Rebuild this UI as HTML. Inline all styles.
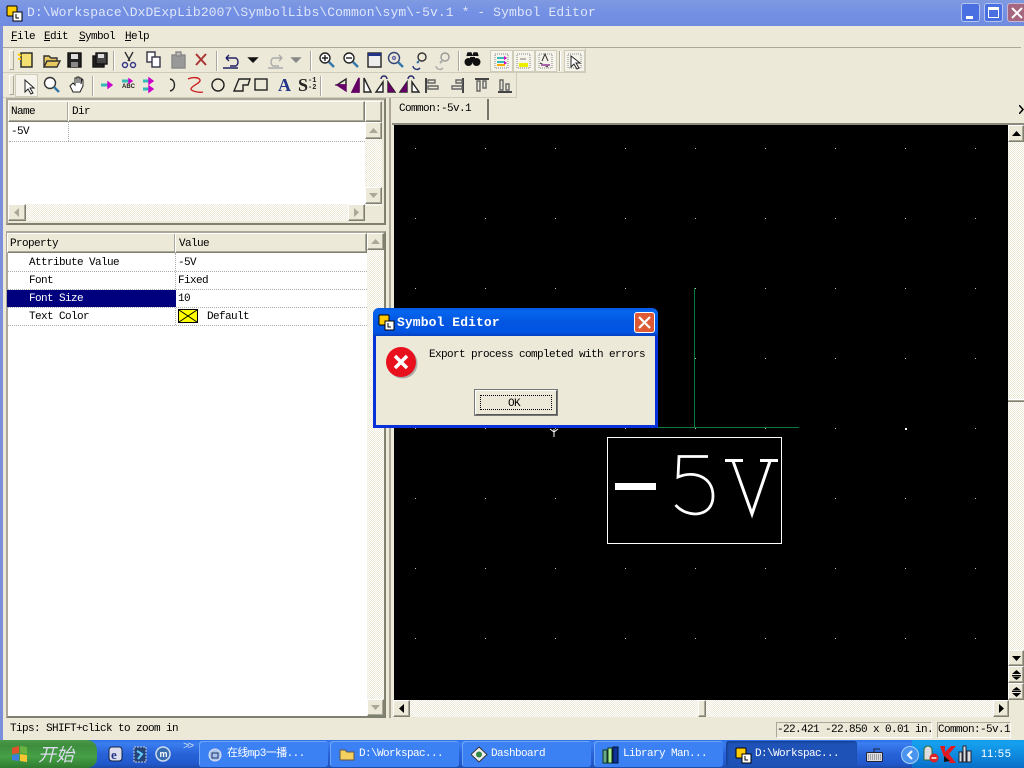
<!DOCTYPE html>
<html><head><meta charset="utf-8"><style>
html,body{margin:0;padding:0;width:1024px;height:768px;overflow:hidden;background:#ece9d8}
div,span,svg{position:absolute;box-sizing:border-box}
.t{font:11px/12px "Liberation Mono","Noto Sans CJK SC",monospace;color:#000;white-space:nowrap;letter-spacing:-.6px;margin-top:1px}
.btn{background:#ece9d8;border:1px solid;border-color:#fff #808070 #808070 #fff;box-shadow:inset -1px -1px 0 #aca899}
.dither{background-color:#fff;background-image:conic-gradient(#ece9d8 25%,#fff 0 50%,#ece9d8 0 75%,#fff 0);background-size:2px 2px}
.dot{border-bottom:1px dotted #aaa}
.sep{background:#aca899;border-right:1px solid #fff;width:2px}
.tb{height:26px;top:741px;border-radius:3px;background:#3c81f3;box-shadow:inset 1px 1px 0 #6ea5f8}
.tb .t{color:#fff;top:6px}
.tog{background:#f5f3ea;border:1px solid #cfccbc}
</style></head><body>

<!-- title bar -->
<div style="left:0;top:0;width:1024px;height:26px;background:linear-gradient(#7f9ae0 0,#7390e4 50%,#6f8ce0 100%)"></div>
<svg style="left:6px;top:5px" width="17" height="17"><rect x="1" y="1" width="10" height="10" rx="1" fill="#fc0" stroke="#000"/><rect x="7" y="7" width="9" height="9" fill="#fff" stroke="#000"/><path d="M10 9v4h3" stroke="#000" fill="none"/></svg>
<div class="t" style="left:27px;top:6px;font-size:13px;letter-spacing:.1px;color:#dfe6f8">D:\Workspace\DxDExpLib2007\SymbolLibs\Common\sym\-5v.1 * - Symbol Editor</div>
<div style="left:961px;top:3px;width:19px;height:19px;border-radius:3px;background:#4a6fe0;border:1px solid #b5c5ee"><div style="left:4px;top:12px;width:7px;height:3px;background:#fff"></div></div>
<div style="left:984px;top:3px;width:19px;height:19px;border-radius:3px;background:#4a6fe0;border:1px solid #b5c5ee"><div style="left:3px;top:3px;width:11px;height:11px;border:1px solid #fff;border-top:3px solid #fff"></div></div>
<div style="left:1007px;top:3px;width:19px;height:19px;border-radius:3px;background:#a5667f;border:1px solid #c9b5d0"><svg style="left:3px;top:3px" width="12" height="12"><path d="M1 1l10 10M11 1L1 11" stroke="#fff" stroke-width="2"/></svg></div>
<div style="left:0;top:26px;width:3px;height:714px;background:#7a8edc"></div>

<!-- menu -->
<div class="t" style="left:11px;top:30px"><u>F</u>ile</div>
<div class="t" style="left:44px;top:30px"><u>E</u>dit</div>
<div class="t" style="left:79px;top:30px"><u>S</u>ymbol</div>
<div class="t" style="left:125px;top:30px"><u>H</u>elp</div>
<div style="left:3px;top:47px;width:1018px;height:1px;background:#aca899"></div>

<!-- toolbar 1 -->
<div style="left:3px;top:48px;width:583px;height:25px;border-right:1px solid #cfccbc;border-bottom:1px solid #cfccbc"></div>
<div style="left:9px;top:50px;width:5px;height:20px;border:1px solid #aca899;border-top-color:#fff;border-left-color:#fff"></div>
<svg style="left:16px;top:49px" width="570" height="24" fill="none" stroke-width="1.4">
<rect x="5" y="4" width="11" height="14" fill="#f4e070" stroke="#222"/><path d="M2 5l3 2M2 10l3 0" stroke="#fc0" stroke-width="2"/>
<path d="M28 18V7h5l2 2h6v3M28 18l3-6h13l-3 6z" fill="#e8c860" stroke="#333"/>
<rect x="52" y="4" width="13" height="14" fill="#222" stroke="#111"/><rect x="55" y="5" width="7" height="5" fill="#ddd"/><rect x="55" y="13" width="7" height="5" fill="#888"/>
<rect x="77" y="7" width="11" height="11" fill="#222" stroke="#111"/><rect x="80" y="4" width="11" height="11" fill="#444" stroke="#111"/><rect x="82" y="5" width="6" height="4" fill="#ddd"/>
<path d="M109 3l5 9M117 3l-5 9" stroke="#333"/><circle cx="109" cy="16" r="2.5" stroke="#338"/><circle cx="117" cy="16" r="2.5" stroke="#338"/>
<rect x="131" y="3" width="8" height="10" fill="#fff" stroke="#334"/><rect x="136" y="8" width="8" height="10" fill="#fff" stroke="#334"/>
<rect x="156" y="6" width="13" height="13" fill="#999" stroke="#888"/><rect x="160" y="3" width="5" height="4" fill="#bbb" stroke="#888"/>
<path d="M180 5l10 11M190 5l-10 11" stroke="#a33" stroke-width="2"/>
<path d="M210 9h10a5 5 0 0 1 0 8h-6M210 9l3-3M210 9l3 3M207 19h15" stroke="#226"/>
<path d="M233 9l8 0-4 4z" fill="#111" stroke="#111"/>
<path d="M266 9h-9a5 5 0 0 0 0 8h6M266 9l-3-3M266 9l-3 3M252 19h15" stroke="#aaa"/>
<path d="M276 9l8 0-4 4z" fill="#888" stroke="#888"/>
<circle cx="309" cy="9" r="5" fill="#fff" stroke="#222"/><path d="M313 13l5 5" stroke="#37a" stroke-width="2.4"/><path d="M306 9h6M309 6v6" stroke="#222"/>
<circle cx="333" cy="9" r="5" fill="#fff" stroke="#222"/><path d="M337 13l5 5" stroke="#37a" stroke-width="2.4"/><path d="M330 9h6" stroke="#222"/>
<rect x="352" y="4" width="13" height="14" fill="#eee" stroke="#222"/><rect x="352" y="4" width="13" height="3" fill="#238"/>
<circle cx="378" cy="9" r="5.5" stroke="#347"/><circle cx="378" cy="9" r="1.5" stroke="#66a"/><path d="M382 13l5 5" stroke="#37a" stroke-width="2.4"/>
<circle cx="406" cy="8" r="4" stroke="#333"/><path d="M403 12l-2 2" stroke="#37a" stroke-width="2"/><path d="M397 17a4 4 0 0 0 7 2" stroke="#237"/>
<circle cx="429" cy="8" r="4" stroke="#999"/><path d="M426 12l-2 2" stroke="#aaa" stroke-width="2"/><path d="M420 17a4 4 0 0 0 7 2" stroke="#aaa"/>
<path d="M451 7l1-3h3l1 3M457 7l1-3h3l1 3" fill="#111" stroke="#111"/><circle cx="452.500" cy="13" r="4" fill="#111"/><circle cx="460.500" cy="13" r="4" fill="#111"/><rect x="454" y="8" width="5" height="5" fill="#111"/>
</svg>
<div class="sep" style="left:113px;top:51px;height:20px"></div>
<div class="sep" style="left:216px;top:51px;height:20px"></div>
<div class="sep" style="left:310px;top:51px;height:20px"></div>
<div class="sep" style="left:458px;top:51px;height:20px"></div>
<div class="sep" style="left:559px;top:51px;height:20px"></div>
<div class="tog" style="left:490px;top:50px;width:23px;height:22px"></div>
<div class="tog" style="left:513px;top:50px;width:22px;height:22px"></div>
<div class="tog" style="left:535px;top:50px;width:22px;height:22px"></div>
<div class="tog" style="left:564px;top:50px;width:21px;height:22px"></div>
<svg style="left:490px;top:50px" width="96" height="22" fill="none">
<rect x="5" y="4" width="13" height="14" stroke="#888" stroke-dasharray="1 1"/><path d="M7 8h8M7 12h8" stroke="#3bb" stroke-width="2"/><path d="M14 6l3 2-3 2zM14 11l3 2-3 2z" fill="#c0c"/><path d="M7 15h8" stroke="#fa0" stroke-width="2"/>
<rect x="27" y="4" width="13" height="14" stroke="#888" stroke-dasharray="1 1"/><path d="M29 15h9" stroke="#ee0" stroke-width="4"/><path d="M30 9h6" stroke="#777"/>
<rect x="49" y="4" width="13" height="14" stroke="#888" stroke-dasharray="1 1"/><path d="M52 11l3-7 3 7M50 13l8 4" stroke="#333"/><path d="M51 15h9" stroke="#aa66aa" stroke-width="2"/>
<rect x="78" y="4" width="13" height="14" stroke="#888" stroke-dasharray="1 1"/><path d="M81 6v11l3-3 3 5 2-1-3-5h4z" fill="#fff" stroke="#222"/>
</svg>

<!-- toolbar 2 -->
<div style="left:3px;top:73px;width:514px;height:25px;border-right:1px solid #cfccbc;border-bottom:1px solid #cfccbc"></div>
<div style="left:9px;top:75px;width:5px;height:20px;border:1px solid #aca899;border-top-color:#fff;border-left-color:#fff"></div>
<div class="tog" style="left:15px;top:74px;width:23px;height:23px"></div>
<svg style="left:16px;top:74px" width="500" height="24" fill="none" stroke-width="1.4">
<path d="M9 6v12l3-3 3 5 2-1-3-5h4z" fill="#fff" stroke="#222" stroke-width="1"/>
<circle cx="34" cy="9" r="5.5" fill="#fff" stroke="#333"/><path d="M38 13l5 5" stroke="#37a" stroke-width="2.4"/>
<path d="M54 12l3 6h7l3-6V6l-1-1-1 5V4h-2v5V3h-2v6V4h-2v7l-2-2z" fill="#fff" stroke="#222" stroke-width="1"/>
<path d="M85 11h7" stroke="#3bb" stroke-width="3"/><path d="M92 8l4 3-4 3z" fill="#c0c" stroke="#c0c"/>
<path d="M106 7h8" stroke="#3bb" stroke-width="3"/><path d="M113 5l3 2-3 2z" fill="#c0c" stroke="#c0c"/>
<path d="M127 7h7M127 15h7" stroke="#3bb" stroke-width="3"/><path d="M133 4l4 3-4 3zM133 12l4 3-4 3z" fill="#c0c" stroke="#c0c"/>
<path d="M154 5c6 1 6 11 0 12" stroke="#222"/>
<path d="M172 5c4-2 11-2 12 1c1 3-9 6-9 9c0 2 8 4 12 3" stroke="#c22"/>
<circle cx="202" cy="11" r="6" stroke="#222"/>
<path d="M218 17l5-12h11l-2 6h-5v6z" stroke="#222"/>
<rect x="239" y="5" width="12" height="11" stroke="#222"/>
<g transform="translate(-16,0)"><path d="M337 11l9-6v6z" stroke="#222"/><path d="M337 11h9v6z" fill="#606" stroke="#606"/></g>
<path d="M343 4v14h-7zM348 4v14h7z" stroke="#222" fill="#fff"/><path d="M343 4v14h-7z" fill="#606" stroke="#606"/>
<path d="M367 18V8l-7 10zM372 18V8l7 10z" stroke="#222" fill="#fff"/><path d="M372 18V8l7 10z" fill="#606"/><path d="M365 5a3 3 0 0 1 6 0" stroke="#226"/>
<path d="M391 18V8l-7 10zM396 18V8l7 10z" stroke="#222" fill="#fff"/><path d="M391 18V8l-7 10z" fill="#606"/><path d="M392 5a3 3 0 0 1 6 0" stroke="#226"/>
<path d="M410 4v15" stroke="#444" stroke-width="2"/><path d="M412 6h7v3h-7zM412 12h10v3h-10z" stroke="#666"/>
<g transform="translate(5,0)"><path d="M442 4v15" stroke="#444" stroke-width="2"/><path d="M435 6h6v3h-6zM431 12h10v3h-10z" stroke="#666"/></g>
<path d="M459 5h14" stroke="#444" stroke-width="2"/><path d="M461 7v10h3V7zM467 7v7h3V7z" stroke="#666"/>
<path d="M482 18h14" stroke="#444" stroke-width="2"/><path d="M484 6v10h3V6zM490 10v6h3v-6z" stroke="#666"/>
</svg>
<div class="t" style="left:278px;top:76px;font:bold 18px/16px 'Liberation Serif',serif;color:#223388;letter-spacing:0">A</div>
<div class="t" style="left:298px;top:76px;font:bold 18px/16px 'Liberation Serif',serif;color:#222;letter-spacing:0">S</div>
<div class="t" style="left:308px;top:77px;font:bold 7px/7px 'Liberation Mono',monospace;color:#222;letter-spacing:0">-1<br>-2</div>
<div class="t" style="left:122px;top:82px;font:bold 6px/8px 'Liberation Sans',sans-serif;color:#222;letter-spacing:0">ABC</div>
<div class="sep" style="left:92px;top:76px;height:20px"></div>
<div class="sep" style="left:320px;top:76px;height:20px"></div>

<!-- upper list -->
<div style="left:6px;top:98px;width:380px;height:127px;border:2px solid;border-color:#aca899 #808070 #808070 #aca899"></div>
<div style="left:8px;top:122px;width:357px;height:84px;background:#fff"></div>
<div class="btn" style="left:8px;top:101px;width:61px;height:21px"></div>
<div class="btn" style="left:68px;top:101px;width:297px;height:21px"></div>
<div class="btn" style="left:365px;top:101px;width:17px;height:21px"></div>
<div class="t" style="left:11px;top:105px">Name</div>
<div class="t" style="left:72px;top:105px">Dir</div>
<div class="t" style="left:11px;top:125px">-5V</div>
<div class="dot" style="left:9px;top:141px;width:356px;height:1px"></div>
<div style="left:68px;top:122px;width:1px;height:19px;border-left:1px dotted #aaa"></div>
<div class="dither" style="left:365px;top:122px;width:17px;height:84px"></div>
<div class="btn" style="left:365px;top:122px;width:17px;height:17px"></div>
<svg style="left:369px;top:128px" width="9" height="5"><path d="M4.5 0L9 5H0z" fill="#aca899"/></svg>
<div class="btn" style="left:365px;top:187px;width:17px;height:17px"></div>
<svg style="left:369px;top:193px" width="9" height="5"><path d="M4.5 5L9 0H0z" fill="#aca899"/></svg>
<div class="dither" style="left:8px;top:204px;width:357px;height:17px"></div>
<div class="btn" style="left:8px;top:204px;width:18px;height:17px"></div>
<svg style="left:14px;top:208px" width="5" height="9"><path d="M0 4.5L5 0V9z" fill="#aca899"/></svg>
<div class="btn" style="left:348px;top:204px;width:17px;height:17px"></div>
<svg style="left:354px;top:208px" width="5" height="9"><path d="M5 4.5L0 0V9z" fill="#aca899"/></svg>

<!-- property list -->
<div style="left:6px;top:231px;width:380px;height:487px;border:2px solid;border-color:#aca899 #808070 #808070 #aca899;background:#fff"></div>
<div class="btn" style="left:7px;top:233px;width:169px;height:20px"></div>
<div class="btn" style="left:175px;top:233px;width:192px;height:20px"></div>
<div class="t" style="left:10px;top:237px">Property</div>
<div class="t" style="left:179px;top:237px">Value</div>
<div class="dot" style="left:7px;top:271px;width:360px;height:1px"></div>
<div class="dot" style="left:7px;top:289px;width:360px;height:1px"></div>
<div class="dot" style="left:7px;top:307px;width:360px;height:1px"></div>
<div class="dot" style="left:7px;top:325px;width:360px;height:1px"></div>
<div style="left:175px;top:253px;width:1px;height:72px;border-left:1px dotted #aaa"></div>
<div style="left:7px;top:290px;width:169px;height:17px;background:#00007f"></div>
<div class="t" style="left:29px;top:256px">Attribute Value</div>
<div class="t" style="left:29px;top:274px">Font</div>
<div class="t" style="left:29px;top:292px;color:#fff">Font Size</div>
<div class="t" style="left:29px;top:310px">Text Color</div>
<div class="t" style="left:178px;top:256px">-5V</div>
<div class="t" style="left:178px;top:274px">Fixed</div>
<div class="t" style="left:178px;top:292px">10</div>
<svg style="left:178px;top:309px" width="20" height="14"><rect x=".5" y=".5" width="19" height="13" fill="#ff0" stroke="#000"/><path d="M1 1l18 12M19 1L1 13" stroke="#000"/></svg>
<div class="t" style="left:207px;top:310px">Default</div>
<div class="dither" style="left:367px;top:233px;width:17px;height:483px"></div>
<div class="btn" style="left:367px;top:233px;width:17px;height:17px"></div>
<svg style="left:371px;top:239px" width="9" height="5"><path d="M4.5 0L9 5H0z" fill="#aca899"/></svg>
<div class="btn" style="left:367px;top:699px;width:17px;height:17px"></div>
<svg style="left:371px;top:705px" width="9" height="5"><path d="M4.5 5L9 0H0z" fill="#aca899"/></svg>

<!-- splitter -->
<div style="left:389px;top:98px;width:2px;height:620px;background:#aca899"></div>

<!-- tab -->
<div style="left:392px;top:98px;width:632px;height:27px;background:#ece9d8;border-bottom:2px solid #8c8a7c"></div>
<div style="left:487px;top:99px;width:2px;height:21px;background:#77756a"></div>
<div class="t" style="left:399px;top:102px">Common:-5v.1</div>
<svg style="left:1019px;top:105px" width="5" height="9"><path d="M0 0l4 4.5L0 9" stroke="#000" fill="none" stroke-width="1.5"/></svg>

<!-- canvas -->
<svg style="left:394px;top:125px" width="614" height="575">
<defs><pattern id="g" x="21" y="23" width="70" height="70" patternUnits="userSpaceOnUse"><rect width="1" height="1" fill="#bbb"/></pattern></defs>
<rect width="614" height="575" fill="#000"/>
<rect width="614" height="575" fill="url(#g)"/>
<rect x="300" y="163" width="1" height="140" fill="#0a7a3a"/>
<rect x="264" y="302" width="141" height="1" fill="#0a7a3a"/>
<rect x="213.500" y="312.500" width="174" height="106" fill="#000" stroke="#fff"/>
<rect x="221" y="358" width="41" height="7" fill="#fff"/>
<path d="M314 331.500H285L284 352C300 345 319 352 319 371C319 392 294 394 281.500 380" fill="none" stroke="#fff" stroke-width="2.800"/>
<path d="M331 335.500H349M366 335.500H384M339 336L358 389L376 336" fill="none" stroke="#fff" stroke-width="3"/>
<path d="M160 304v8M156 304l4 3 4-3" stroke="#fff" fill="none" stroke-width="1"/>
<rect x="511" y="303" width="2" height="2" fill="#fff"/>
</svg>

<!-- right scrollbars -->
<div class="dither" style="left:1008px;top:125px;width:16px;height:575px"></div>
<div class="btn" style="left:1008px;top:125px;width:16px;height:17px"></div>
<svg style="left:1012px;top:131px" width="9" height="5"><path d="M4.500 0L9 5H0z" fill="#000"/></svg>
<div class="btn" style="left:1008px;top:399px;width:16px;height:3px;border-width:1px 0"></div>
<div class="btn" style="left:1008px;top:650px;width:16px;height:16px"></div>
<svg style="left:1012px;top:656px" width="9" height="5"><path d="M4.500 5L9 0H0z" fill="#000"/></svg>
<div class="btn" style="left:1008px;top:666px;width:16px;height:17px"></div>
<svg style="left:1012px;top:670px" width="9" height="10"><path d="M4.500 0L9 4H0zM0 5h9v1H0zM4.500 10L9 6.500H0z" fill="#000"/></svg>
<div class="btn" style="left:1008px;top:683px;width:16px;height:17px"></div>
<svg style="left:1012px;top:687px" width="9" height="10"><path d="M4.500 10L9 6H0zM0 4h9v1H0zM4.500 0L9 3.500H0z" fill="#000"/></svg>
<div class="dither" style="left:394px;top:700px;width:614px;height:17px"></div>
<div class="btn" style="left:393px;top:700px;width:17px;height:17px"></div>
<svg style="left:399px;top:704px" width="5" height="9"><path d="M0 4.500L5 0V9z" fill="#000"/></svg>
<div class="btn" style="left:698px;top:700px;width:8px;height:17px"></div>
<div class="btn" style="left:993px;top:700px;width:16px;height:17px"></div>
<svg style="left:999px;top:704px" width="5" height="9"><path d="M5 4.500L0 0V9z" fill="#000"/></svg>

<!-- status bar -->
<div class="t" style="left:10px;top:722px">Tips: SHIFT+click to zoom in</div>
<div style="left:776px;top:722px;width:156px;height:16px;border:1px solid;border-color:#aca899 #fff #fff #aca899"></div>
<div style="left:937px;top:722px;width:74px;height:16px;border:1px solid;border-color:#aca899 #fff #fff #aca899"></div>
<div class="t" style="left:777px;top:723px">-22.421 -22.850 x 0.01 in.</div>
<div class="t" style="left:938px;top:723px">Common:-5v.1</div>

<!-- taskbar -->
<div style="left:0;top:740px;width:1024px;height:28px;background:linear-gradient(#2a6fe8 0,#3a7ef0 12%,#2862d8 50%,#2159cc 85%,#1c4aa8 100%)"></div>
<div style="left:0;top:740px;width:97px;height:28px;border-radius:0 10px 10px 0;background:linear-gradient(#4a9a4a,#3d8d3d 20%,#46a046 60%,#2f7a2f)"></div>
<svg style="left:10px;top:745px" width="20" height="18"><path d="M2 3l7-2v7l-7 1z" fill="#e2522a"/><path d="M10 1l7 1v7l-7-1z" fill="#6cb33f"/><path d="M2 10l7-1v7l-7-1z" fill="#3f7fdc"/><path d="M10 9l7 1v7l-7-1z" fill="#f8c630"/></svg>
<div class="t" style="left:38px;top:742px;font:italic 18px/22px 'Noto Sans CJK SC',sans-serif;color:#dde;letter-spacing:0">开始</div>
<svg style="left:106px;top:744px" width="70" height="20"><rect x="3" y="3" width="13" height="14" rx="3" fill="#dde" stroke="#124"/><text x="5" y="15" font-family="Liberation Serif,serif" font-weight="bold" font-size="13" fill="#238">e</text><rect x="28" y="3" width="12" height="15" fill="#247" stroke="#ccd" stroke-dasharray="2 1"/><path d="M31 7l5 3-4 5" stroke="#6cf" stroke-width="2" fill="none"/><circle cx="57" cy="10" r="7" fill="#3a6db0" stroke="#cde" stroke-width="1.500"/><text x="53.500" y="13" font-family="Liberation Sans,sans-serif" font-weight="bold" font-size="9" fill="#fff">m</text></svg>
<div class="t" style="left:183px;top:740px;color:#cde;font-size:11px;letter-spacing:-2px">&gt;&gt;</div>
<div class="tb" style="left:199px;width:129px"><svg style="left:8px;top:6px" width="16" height="16"><circle cx="8" cy="8" r="6" fill="#a8c4ee" stroke="#dde"/><rect x="5" y="6" width="6" height="5" fill="none" stroke="#236"/></svg><div class="t" style="left:28px">在线mp3一播...</div></div>
<div class="tb" style="left:330px;width:129px"><svg style="left:9px;top:6px" width="17" height="15"><path d="M1 13V3h5l2 2h7v8z" fill="#f4d060" stroke="#654"/></svg><div class="t" style="left:29px">D:\Workspac...</div></div>
<div class="tb" style="left:462px;width:129px"><svg style="left:9px;top:5px" width="17" height="17"><path d="M8 1l8 7.500-8 7.500-8-7.500z" fill="#eee" stroke="#333"/><circle cx="8" cy="8.500" r="3" fill="#384"/></svg><div class="t" style="left:29px">Dashboard</div></div>
<div class="tb" style="left:594px;width:129px"><svg style="left:8px;top:4px" width="18" height="19"><rect x="1" y="5" width="4" height="13" fill="#6a8" stroke="#132"/><rect x="6" y="3" width="4" height="15" fill="#ae8" stroke="#132"/><rect x="11" y="2" width="5" height="16" fill="#139" stroke="#013"/></svg><div class="t" style="left:29px">Library Man...</div></div>
<div class="tb" style="left:726px;width:131px;background:#1e52b7;box-shadow:inset 1px 1px 2px #153a85"><svg style="left:9px;top:6px" width="17" height="17"><rect x="1" y="1" width="10" height="10" rx="1" fill="#fc0" stroke="#000"/><rect x="7" y="7" width="9" height="9" fill="#fff" stroke="#000"/><path d="M10 9v4h3" stroke="#000" fill="none"/></svg><div class="t" style="left:29px">D:\Workspac...</div></div>
<svg style="left:866px;top:748px" width="17" height="14"><rect x=".5" y="4.500" width="16" height="9" rx="1" fill="#ddd" stroke="#223"/><path d="M2 7h13M2 9h13M2 11h13" stroke="#667" stroke-dasharray="1 1"/><path d="M8 4V1h6" stroke="#223" fill="none"/></svg>
<div style="left:912px;top:740px;width:112px;height:28px;background:linear-gradient(#0f9bec,#16a0ee 12%,#0d86dc 60%,#0a6ec8)"></div>
<svg style="left:901px;top:746px" width="18" height="18"><circle cx="9" cy="9" r="8.500" fill="#4a93ee" stroke="#a8d0f8"/><path d="M11 5L7 9l4 4" stroke="#fff" stroke-width="2" fill="none"/></svg>
<svg style="left:921px;top:744px" width="70" height="20"><path d="M3 16V6a4 4 0 0 1 8 0v10z" fill="#ddd" stroke="#363"/><circle cx="13" cy="14" r="4.500" fill="#d22"/><path d="M10.500 14h5" stroke="#fff" stroke-width="1.500"/><path d="M19 2h5v6l6-6h5l-7 8 7 9h-6l-5-7v3l-1-2z" fill="#e01a20"/><path d="M23 12l6 5-6 1z" fill="#111"/><path d="M38 18V8h3v10zM42 18V2h3v16zM46 18V7h4v11z" fill="#ddd" stroke="#223"/></svg>
<div class="t" style="left:981px;top:747px;color:#fff;font:11px/13px 'Liberation Sans',sans-serif;letter-spacing:.8px">11:55</div>

<!-- dialog -->
<div style="left:373px;top:308px;width:285px;height:120px;background:#0831d9;border-radius:6px 6px 0 0"></div>
<div style="left:373px;top:308px;width:285px;height:28px;border-radius:6px 6px 0 0;background:linear-gradient(#0a55e0,#0466f0 10%,#0356e0 50%,#0254e4 85%,#0440c0)"></div>
<div style="left:376px;top:336px;width:279px;height:89px;background:#ece9d8"></div>
<svg style="left:378px;top:314px" width="17" height="17"><rect x="1" y="1" width="10" height="10" rx="1" fill="#fc0" stroke="#000"/><rect x="7" y="7" width="9" height="9" fill="#fff" stroke="#000"/><path d="M10 9v4h3" stroke="#000" fill="none"/></svg>
<div class="t" style="left:397px;top:316px;font-size:13px;font-weight:bold;letter-spacing:.1px;color:#fff">Symbol Editor</div>
<div style="left:634px;top:312px;width:21px;height:21px;border-radius:3px;background:#dd5a35;border:1px solid #fff"><svg style="left:3px;top:3px" width="13" height="13"><path d="M1 1l11 11M12 1L1 12" stroke="#fff" stroke-width="2.200"/></svg></div>
<svg style="left:385px;top:346px" width="34" height="34"><circle cx="17.500" cy="17.500" r="15" fill="#aaa"/><circle cx="16" cy="16" r="15" fill="#e8101c"/><path d="M10 10l12 12M22 10L10 22" stroke="#fff" stroke-width="3.500"/></svg>
<div class="t" style="left:429px;top:348px">Export process completed with errors</div>
<div style="left:475px;top:390px;width:82px;height:25px;background:#ece9d8;border:1px solid;border-color:#fff #555 #555 #fff;box-shadow:0 0 0 1px #777"></div>
<div style="left:480px;top:395px;width:72px;height:15px;border:1px dotted #000"></div>
<div class="t" style="left:508px;top:397px">OK</div>

</body></html>
